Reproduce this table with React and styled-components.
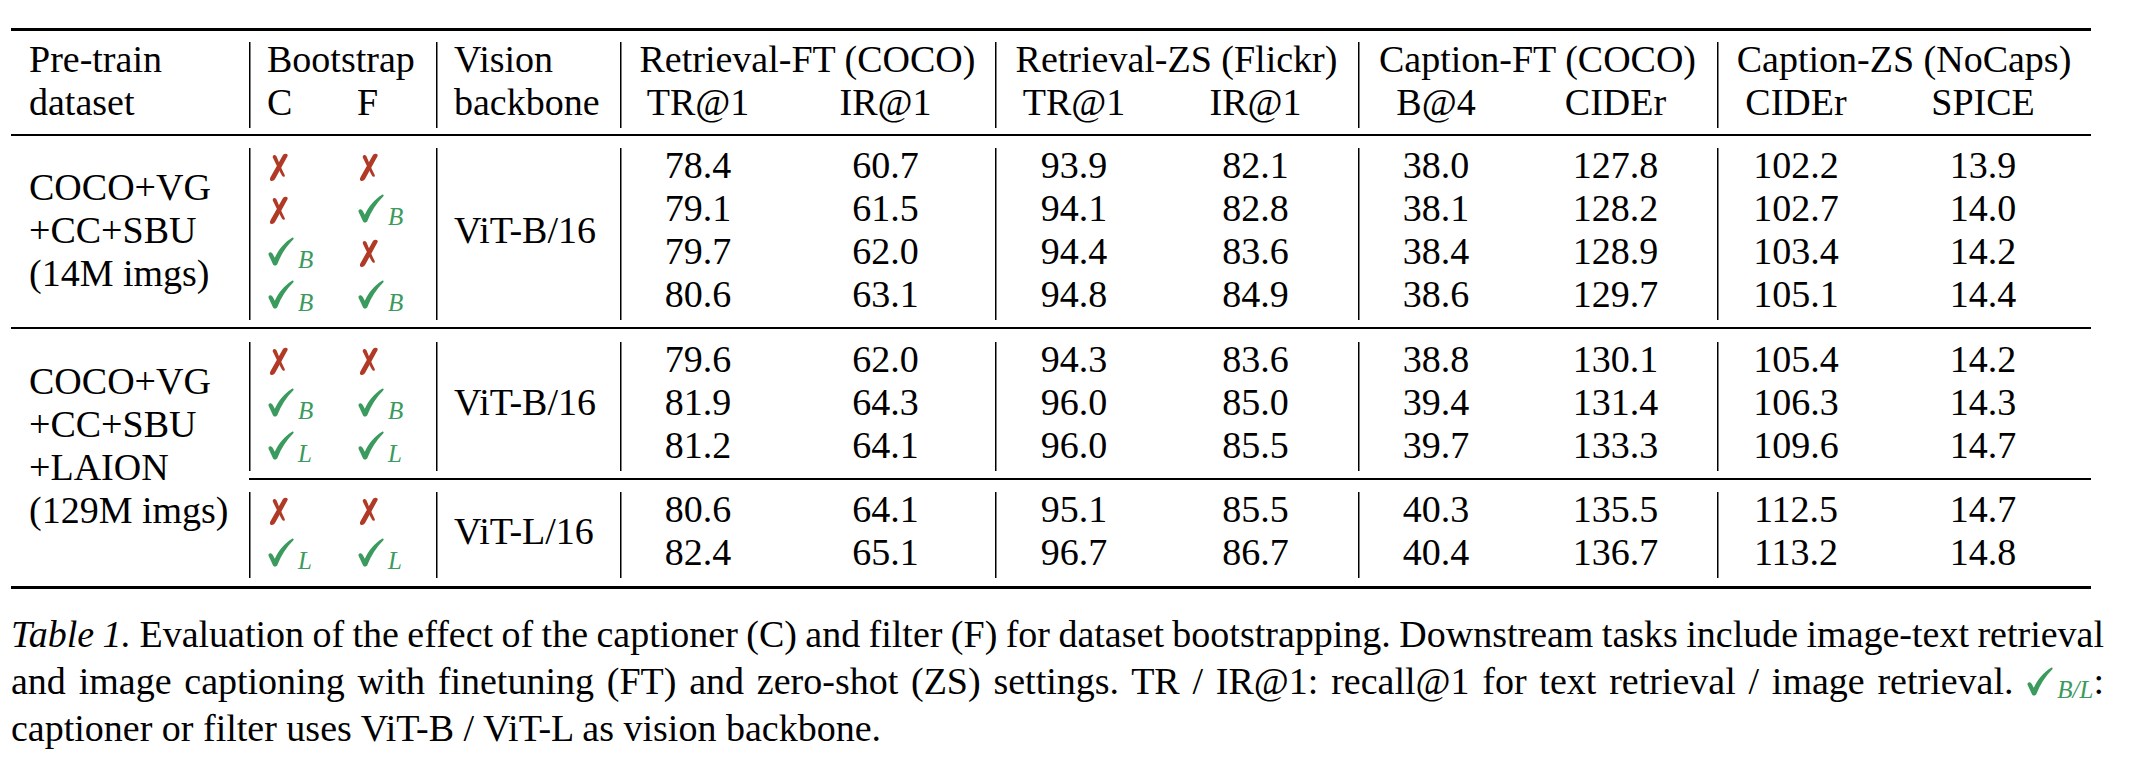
import React from 'react'
import styled, { createGlobalStyle } from 'styled-components'

const GlobalStyle = createGlobalStyle`
  html, body {
    margin: 0;
    padding: 0;
    background: #fff;
  }
  body {
    font-family: "Liberation Serif", "Times New Roman", serif;
    color: #000;
  }
`

const Page = styled.div`
  padding: 28px 0 0 11px;
  width: 2119px;
`

const Table = styled.table`
  border-collapse: separate;
  border-spacing: 0;
  table-layout: fixed;
  width: 2080px;
  font-size: 38px;
`

const Col = styled.col`
  width: ${({ $w }) => $w}px;
`

const RuleCell = styled.td`
  padding: 0;
  height: ${({ $h }) => $h}px;
  background: ${({ $line }) => ($line ? '#000' : 'transparent')};
  font-size: 0;
  line-height: 0;
`

const Cell = styled.td`
  padding: 0 ${({ $center }) => ($center ? '0' : '18px')} 8px;
  line-height: 35px;
  height: 35px;
  white-space: nowrap;
  text-align: ${({ $center }) => ($center ? 'center' : 'left')};
  vertical-align: ${({ $middle }) => ($middle ? 'middle' : 'top')};
  box-shadow: ${({ $bar }) => ($bar ? 'inset 1.5px 0 0 #000' : 'none')};
`

const Dataset = styled.td`
  padding: 0 18px ${({ $shift }) => $shift || 0}px;
  vertical-align: middle;
  white-space: nowrap;
`

const Line = styled.div`
  line-height: 35px;
  padding-bottom: 8px;
`

const Glyph = styled.svg`
  display: inline-block;
  width: ${({ $w }) => $w}px;
  height: 29px;
  vertical-align: ${({ $drop }) => -$drop}px;
  fill: ${({ $ok }) => ($ok ? '#3b9a5d' : '#b03a26')};
`

const Sub = styled.span`
  font-family: "Liberation Serif", serif;
  font-style: italic;
  font-size: 25px;
  line-height: 0;
  vertical-align: -4px;
  margin-left: 3px;
  color: #3b9a5d;
`

const Caption = styled.div`
  width: 2093px;
  margin-top: 22px;
  font-size: 38px;
  line-height: 47px;
`

const CaptionLine = styled.div`
  text-align: justify;
  text-align-last: ${({ $last }) => ($last ? 'left' : 'justify')};
  word-spacing: ${({ $tight }) => ($tight ? '-3px' : 'normal')};
  white-space: nowrap;
`

const widths = [238, 90, 97, 184, 156, 219, 158, 205, 156, 203, 158, 216]

const tasks = [
  { title: 'Retrieval-FT (COCO)', cols: ['TR@1', 'IR@1'] },
  { title: 'Retrieval-ZS (Flickr)', cols: ['TR@1', 'IR@1'] },
  { title: 'Caption-FT (COCO)', cols: ['B@4', 'CIDEr'] },
  { title: 'Caption-ZS (NoCaps)', cols: ['CIDEr', 'SPICE'] },
]

const groups = [
  {
    dataset: ['COCO+VG', '+CC+SBU', '(14M imgs)'],
    blocks: [
      {
        backbone: 'ViT-B/16',
        rows: [
          [null, null, '78.4', '60.7', '93.9', '82.1', '38.0', '127.8', '102.2', '13.9'],
          [null, 'B', '79.1', '61.5', '94.1', '82.8', '38.1', '128.2', '102.7', '14.0'],
          ['B', null, '79.7', '62.0', '94.4', '83.6', '38.4', '128.9', '103.4', '14.2'],
          ['B', 'B', '80.6', '63.1', '94.8', '84.9', '38.6', '129.7', '105.1', '14.4'],
        ],
      },
    ],
  },
  {
    dataset: ['COCO+VG', '+CC+SBU', '+LAION', '(129M imgs)'],
    shift: 21,
    blocks: [
      {
        backbone: 'ViT-B/16',
        rows: [
          [null, null, '79.6', '62.0', '94.3', '83.6', '38.8', '130.1', '105.4', '14.2'],
          ['B', 'B', '81.9', '64.3', '96.0', '85.0', '39.4', '131.4', '106.3', '14.3'],
          ['L', 'L', '81.2', '64.1', '96.0', '85.5', '39.7', '133.3', '109.6', '14.7'],
        ],
      },
      {
        backbone: 'ViT-L/16',
        rows: [
          [null, null, '80.6', '64.1', '95.1', '85.5', '40.3', '135.5', '112.5', '14.7'],
          ['L', 'L', '82.4', '65.1', '96.7', '86.7', '40.4', '136.7', '113.2', '14.8'],
        ],
      },
    ],
  },
]

// pifont-style brush marks
const Tick = () => (
  <Glyph $ok $w={28} $drop={1.5} viewBox="0 0 28 30" aria-label="✓">
    <path d="M1.2 18.5C0.6 17 1.8 15.6 3.4 15.8C4.8 16 5.6 17.6 6.6 19.6L7.6 21.5C11.5 13 17.5 5.5 25.5 0.8C26.6 0.2 27.6 1.2 26.8 2.2C19.5 9.5 14 18 10.5 27.5C10 28.9 9 29.6 7.8 29.6C6.4 29.6 5.8 28.6 5.2 27.2C4 24.2 2.6 21.5 1.2 18.5Z" />
  </Glyph>
)

const Cross = () => (
  <Glyph $w={24} $drop={4} viewBox="0 0 24 30" aria-label="✗">
    <path d="M18.5 0.8C20.5 0.5 21.5 2 20.8 3.3L8.2 26.5C7.2 28.6 5.2 29.6 3.6 28.8C2.2 28 2.4 26.4 3.3 24.8L15.8 2.6C16.5 1.5 17.4 0.9 18.5 0.8Z" />
    <path d="M6.5 2.2C7.8 1.6 9 2.4 9.6 3.8C11.5 8.5 14.5 16 17.8 22.5C18.4 23.7 17.8 24.8 16.8 24.6C15.6 24.4 14.8 23 14 21.5C11 15.8 8 9.8 5.8 5.2C5.2 3.9 5.5 2.7 6.5 2.2Z" />
  </Glyph>
)

const Check = ({ sub }) =>
  sub ? (
    <>
      <Tick />
      <Sub>{sub}</Sub>
    </>
  ) : (
    <Cross />
  )

const Rule = ({ h, span = 12 }) => (
  <tr>
    <RuleCell colSpan={span} $h={h} $line />
  </tr>
)

const Gap = ({ h, span = 12 }) => (
  <tr>
    <RuleCell colSpan={span} $h={h} />
  </tr>
)

const DataRow = ({ row, first, block, dataset, shift, span }) => (
  <tr>
    {dataset && (
      <Dataset rowSpan={span} $shift={shift}>
        {dataset.map((d) => (
          <Line key={d}>{d}</Line>
        ))}
      </Dataset>
    )}
    <Cell $bar>
      <Check sub={row[0]} />
    </Cell>
    <Cell>
      <Check sub={row[1]} />
    </Cell>
    {first && (
      <Cell $bar $middle rowSpan={block.rows.length}>
        {block.backbone}
      </Cell>
    )}
    {row.slice(2).map((v, i) => (
      <Cell key={i} $center $bar={i % 2 === 0}>
        {v}
      </Cell>
    ))}
  </tr>
)

const Group = ({ group }) => {
  const span =
    group.blocks.reduce((n, b) => n + b.rows.length, 0) + (group.blocks.length - 1) * 3
  const out = []
  group.blocks.forEach((block, bi) => {
    if (bi > 0) {
      out.push(<Gap key={`g1-${bi}`} h={7} span={11} />)
      out.push(<Rule key={`r-${bi}`} h={2} span={11} />)
      out.push(<Gap key={`g2-${bi}`} h={12} span={11} />)
    }
    block.rows.forEach((row, ri) => {
      const lead = bi === 0 && ri === 0
      out.push(
        <DataRow
          key={`${bi}-${ri}`}
          row={row}
          first={ri === 0}
          block={block}
          dataset={lead ? group.dataset : null}
          shift={group.shift}
          span={span}
        />
      )
    })
  })
  return out
}

const App = () => (
  <Page>
    <GlobalStyle />
    <Table>
      <colgroup>
        {widths.map((w, i) => (
          <Col key={i} $w={w} />
        ))}
      </colgroup>
      <tbody>
        <Rule h={3} />
        <Gap h={11} />
        <tr>
          <Cell>Pre-train</Cell>
          <Cell $bar colSpan={2}>Bootstrap</Cell>
          <Cell $bar>Vision</Cell>
          {tasks.map((t) => (
            <Cell key={t.title} $bar $center colSpan={2}>
              {t.title}
            </Cell>
          ))}
        </tr>
        <tr>
          <Cell>dataset</Cell>
          <Cell $bar>C</Cell>
          <Cell>F</Cell>
          <Cell $bar>backbone</Cell>
          {tasks.map((t) =>
            t.cols.map((c, i) => (
              <Cell key={t.title + c} $center $bar={i === 0}>
                {c}
              </Cell>
            ))
          )}
        </tr>
        <Gap h={6} />
        <Rule h={2} />
        <Gap h={12} />
        <Group group={groups[0]} />
        <Gap h={7} />
        <Rule h={2} />
        <Gap h={13} />
        <Group group={groups[1]} />
        <Gap h={8} />
        <Rule h={3} />
      </tbody>
    </Table>
    <Caption>
      <CaptionLine $tight>
        <i>Table 1.</i> Evaluation of the effect of the captioner (C) and filter (F) for dataset
        bootstrapping. Downstream tasks include image-text retrieval
      </CaptionLine>
      <CaptionLine>
        and image captioning with finetuning (FT) and zero-shot (ZS) settings. TR / IR@1: recall@1
        for text retrieval / image retrieval. <Tick />
        <Sub>B/L</Sub>:
      </CaptionLine>
      <CaptionLine $last>captioner or filter uses ViT-B / ViT-L as vision backbone.</CaptionLine>
    </Caption>
  </Page>
)

export default App
